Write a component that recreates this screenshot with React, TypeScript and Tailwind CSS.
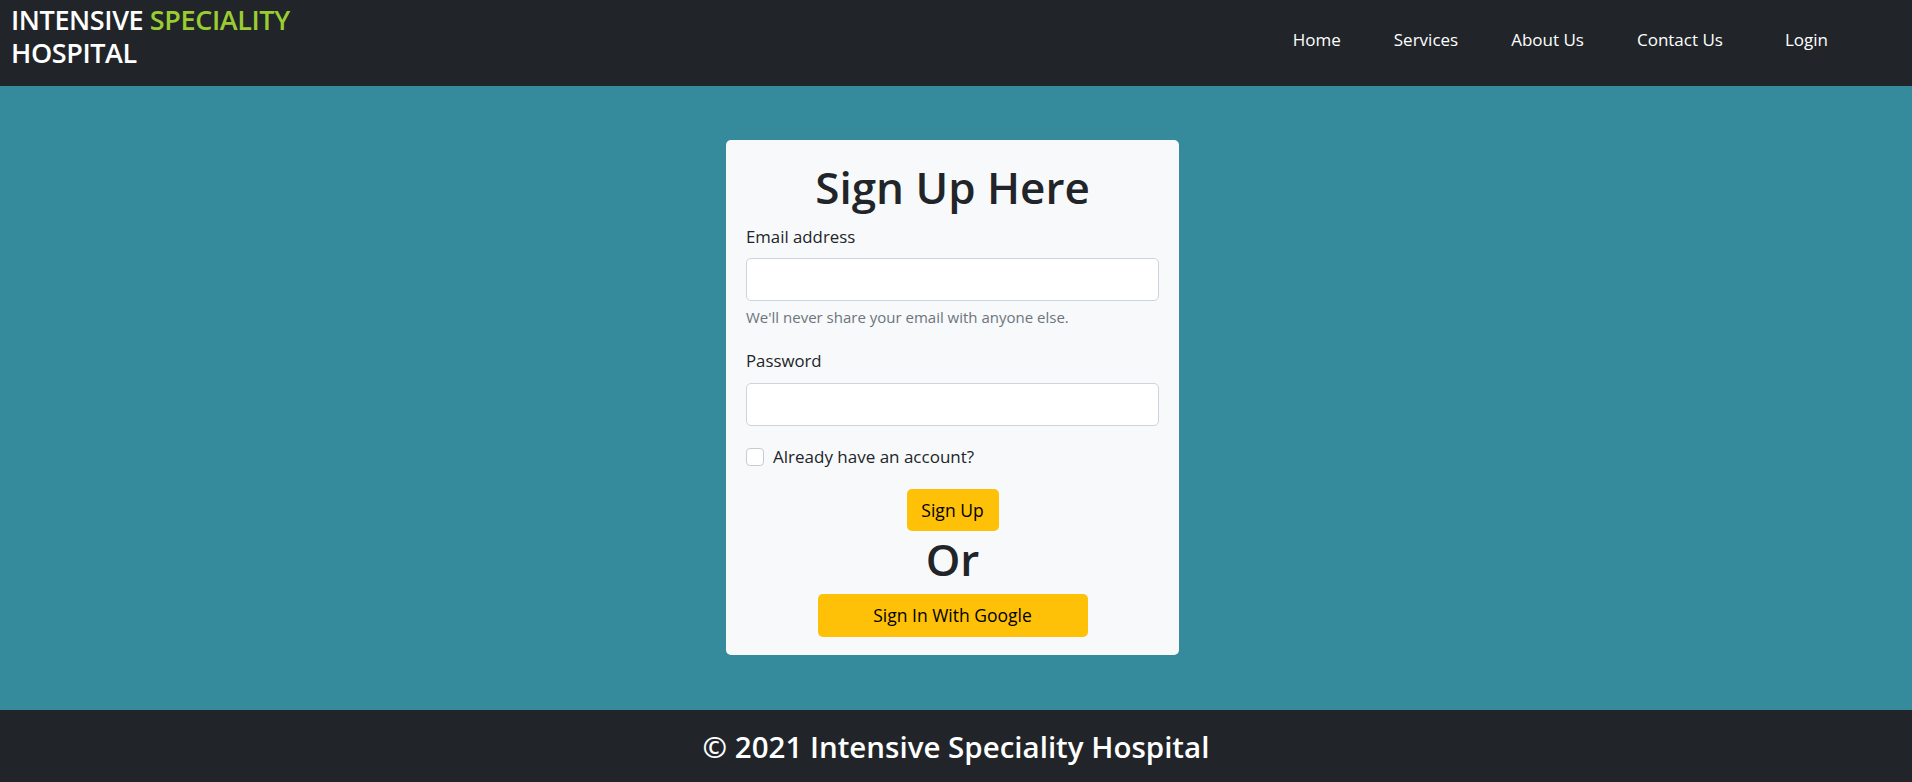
// App.tsx — Intensive Speciality Hospital sign-up page
import { useState } from 'react'

const font = { fontFamily: '"Open Sans", "Noto Sans", Arial, sans-serif' }

function Navbar() {
  const links = ['Home', 'Services', 'About Us', 'Contact Us']
  return (
    <nav className="h-[86px] bg-[#212529] flex items-start justify-between pl-[11px] pr-[84px]">
      {/* brand */}
      <div className="pt-[3px] text-[27px] leading-[33px] font-semibold tracking-[-0.4px] text-white">
        <div>
          INTENSIVE <span className="text-[#9acd32]">SPECIALITY</span>
        </div>
        <div>HOSPITAL</div>
      </div>

      {/* links */}
      <ul className="flex items-center gap-[53px] pt-[27px] text-[17px] leading-[26px] text-white">
        {links.map(l => (
          <li key={l}>
            <a href="#">{l}</a>
          </li>
        ))}
        <li className="ml-[9px]">
          <a href="#">Login</a>
        </li>
      </ul>
    </nav>
  )
}

function SignUpCard() {
  const [email, setEmail] = useState('')
  const [password, setPassword] = useState('')
  const [hasAccount, setHasAccount] = useState(false)

  return (
    <div className="w-[453px] bg-[#f8f9fa] rounded-[5px] px-[20px] pt-[21px] pb-[18px] text-[#212529]">
      <h1 className="text-[44px] leading-[53px] h-[53px] font-semibold text-center">Sign Up Here</h1>

      <label className="block mt-[11px] text-[16.8px] leading-[24px]">Email address</label>
      <input
        type="email"
        value={email}
        onChange={e => setEmail(e.target.value)}
        className="block w-full mt-[9px] h-[43px] bg-white border border-[#ced4da] rounded-[5px] px-3 outline-none"
      />
      <div className="mt-[5px] text-[15px] leading-[22px] text-[#6c757d]">
        We'll never share your email with anyone else.
      </div>

      <label className="block mt-[21px] text-[16.8px] leading-[24px]">Password</label>
      <input
        type="password"
        value={password}
        onChange={e => setPassword(e.target.value)}
        className="block w-full mt-[10px] h-[43px] bg-white border border-[#ced4da] rounded-[5px] px-3 outline-none"
      />

      <label className="flex items-center gap-[9px] mt-[19px] h-[24px] text-[17px] leading-[24px]">
        <input
          type="checkbox"
          checked={hasAccount}
          onChange={e => setHasAccount(e.target.checked)}
          className="appearance-none w-[18px] h-[18px] bg-white border border-[#c8ccd0] rounded-[4px]"
        />
        Already have an account?
      </label>

      <div className="flex justify-center mt-[20px]">
        <button className="w-[92px] h-[42px] bg-[#ffc107] rounded-[5px] text-[17.5px] text-black">Sign Up</button>
      </div>

      <div className="text-[44px] leading-[53px] h-[53px] font-semibold text-center mt-[2px]">Or</div>

      <div className="flex justify-center mt-[8px]">
        <button className="w-[270px] h-[43px] bg-[#ffc107] rounded-[5px] text-[17.5px] text-black">
          Sign In With Google
        </button>
      </div>
    </div>
  )
}

export default function App() {
  return (
    <div style={font} className="w-[1912px] h-[782px] flex flex-col">
      <Navbar />
      <main className="h-[624px] bg-[#358b9b] flex items-start justify-center pt-[54px] pr-[7px]">
        <SignUpCard />
      </main>
      <footer className="h-[72px] bg-[#212529] pt-[19px] text-center text-[29.5px] leading-[35px] font-semibold text-white">
        © 2021 Intensive Speciality Hospital
      </footer>
    </div>
  )
}
